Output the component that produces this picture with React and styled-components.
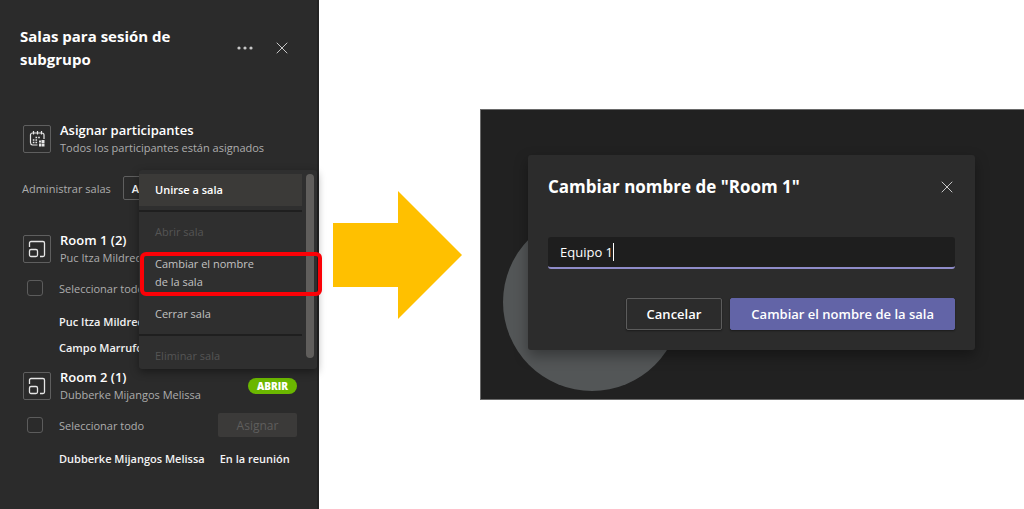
import React, { useState } from 'react'
import styled, { createGlobalStyle } from 'styled-components'

const GlobalStyle = createGlobalStyle`
    * {
        box-sizing: border-box;
    }

    body {
        margin: 0;
        background: #fff;
        font-family: "Open Sans", "Noto Sans", sans-serif;
        font-size: 11px;
        line-height: 17px;
    }

    button, input {
        font: inherit;
        color: inherit;
        margin: 0;
    }

    h1, h2, h3, p, ul {
        margin: 0;
        padding: 0;
        list-style: none;
    }
`

const Page = styled.div`
    display: flex;
    min-height: 100vh;
    align-items: center;
`

const Sidebar = styled.aside`
    flex: 0 0 319px;
    align-self: stretch;
    padding: 25px 20px 24px;
    background: #2b2b2b;
    border-right: 2px solid #232323;
    color: #adadad;
`

const SidebarHeader = styled.header`
    display: flex;
    align-items: center;
    margin-bottom: 51px;
    padding-right: 7px;
`

const Title = styled.h1`
    flex: 1;
    max-width: 190px;
    font-size: 15px;
    line-height: 23px;
    font-weight: 700;
    color: #fff;
`

const IconButton = styled.button`
    display: flex;
    align-items: center;
    justify-content: center;
    width: 16px;
    height: 20px;
    padding: 0;
    border: 0;
    background: none;
    color: #c8c8c8;
`

const HeaderActions = styled.div`
    display: flex;
    gap: 21px;
    margin-left: auto;
`

const Entry = styled.div`
    display: flex;
    align-items: center;
    gap: 9px;
    height: 34px;
    padding-left: 3px;
`

const IconFrame = styled.span`
    display: flex;
    align-items: center;
    justify-content: center;
    width: 28px;
    height: 28px;
    border: 1px solid #5f5f5f;
    border-radius: 2px;
    color: #e6e6e6;
`

const EntryText = styled.div`
    flex: 1;
`

const EntryTitle = styled.h2`
    font-size: 13px;
    line-height: 17px;
    font-weight: 600;
    color: #fff;
`

const Badge = styled.span`
    padding: 0 9px;
    border-radius: 8px;
    background: #6bb700;
    color: #fff;
    font-size: 10px;
    line-height: 16px;
    font-weight: 800;
`

const ManageRow = styled.div`
    position: relative;
    display: flex;
    align-items: center;
    gap: 12px;
    height: 24px;
    margin: 20px 0 32px;
    padding-left: 2px;
`

const OutlineButton = styled.button`
    width: 40px;
    height: 24px;
    padding: 0 8px;
    border: 1px solid #5f5f5f;
    border-radius: 2px;
    background: none;
    color: #fff;
    font-weight: 600;
    text-align: left;
`

const SelectRow = styled.div`
    display: flex;
    align-items: center;
    justify-content: space-between;
    height: 24px;
    margin: 10px 0 13px;
    padding-left: 7px;
`

const CheckLabel = styled.label`
    display: flex;
    align-items: center;
    gap: 16px;
`

const Checkbox = styled.input`
    appearance: none;
    width: 16px;
    height: 16px;
    border: 1px solid #5c5c5c;
    border-radius: 3px;
`

const AssignButton = styled.button`
    width: 79px;
    height: 24px;
    padding: 0;
    border: 0;
    border-radius: 2px;
    background: #3b3a39;
    color: #5f5e5d;
    font-size: 12px;
`

const Person = styled.li`
    display: flex;
    gap: 15px;
    height: 26px;
    padding-left: 39px;
    font-weight: 600;
    line-height: 18px;
    color: #f3f3f3;
    white-space: nowrap;
`

const Room = styled.section`
    margin-top: ${props => props.$spaced ? '4px' : 0};
`

const Menu = styled.div`
    position: absolute;
    z-index: 1;
    top: -6px;
    left: 119px;
    display: flex;
    width: 178px;
    padding: 4px 3px 0 0;
    border-radius: 3px;
    background: #2f2f2f;
    box-shadow: 0 3px 8px rgba(0, 0, 0, 0.4);
`

const MenuList = styled.ul`
    flex: 1;
`

const MenuItem = styled.button`
    display: block;
    width: 100%;
    padding: 7px 40px 7px 16px;
    border: 0;
    background: ${props => props.$active ? '#3b3a38' : 'none'};
    color: ${props => props.$active ? '#fff' : '#c2c2c2'};
    line-height: 18px;
    font-weight: ${props => props.$active ? 600 : 400};
    text-align: left;

    &:disabled {
        color: #555;
    }

    li:last-child > & {
        padding-bottom: 4px;
    }
`

const Divider = styled.li`
    height: 2px;
    margin: 4px 0;
    background: #1f1f1f;
`

const Marked = styled.li`
    position: relative;

    &:after {
        content: "";
        position: absolute;
        inset: 4px -20px 2px 1px;
        border: 4px solid #fb0207;
        border-radius: 6px;
    }
`

const Scrollbar = styled.div`
    width: 8px;
    margin: 0 0 11px 4px;
    border-radius: 4px;
    background: #605e5c;
`

const ArrowColumn = styled.div`
    flex: 0 0 161px;
    padding-left: 14px;

    svg {
        display: block;
    }
`

const Stage = styled.main`
    position: relative;
    flex: 1;
    padding: 45px 49px 49px 47px;
    border: solid #6a6a6a;
    border-width: 1px 0 1px 1px;
    background: #212121;
    overflow: hidden;
`

const Avatar = styled.div`
    position: absolute;
    left: 22px;
    bottom: 8px;
    width: 178px;
    height: 178px;
    border-radius: 50%;
    background: #535657;
`

const Dialog = styled.form`
    position: relative;
    padding: 20px;
    border-radius: 3px;
    background: #2c2c2c;
    box-shadow: 0 6px 14px rgba(0, 0, 0, 0.35);
    color: #fff;
`

const DialogHeader = styled.header`
    display: flex;
    align-items: center;
    justify-content: space-between;
    height: 24px;
    margin-bottom: 38px;
`

const DialogTitle = styled.h2`
    font-size: 17px;
    line-height: 24px;
    font-weight: 700;
`

const Field = styled.div`
    display: flex;
    align-items: center;
    height: 32px;
    padding: 0 12px;
    border-bottom: 2px solid #8f8cc9;
    border-radius: 3px;
    background: #1e1e1e;
`

const NameInput = styled.input`
    field-sizing: content;
    padding: 0;
    border: 0;
    outline: 0;
    background: none;
    caret-color: transparent;
    font-size: 13px;
    line-height: 18px;
`

const Caret = styled.span`
    width: 1px;
    height: 18px;
    background: #fff;
`

const DialogActions = styled.div`
    display: flex;
    justify-content: flex-end;
    gap: 8px;
    margin-top: 29px;
`

const DialogButton = styled.button`
    min-width: 96px;
    height: 32px;
    padding: 0 20px;
    border: 1px solid ${props => props.$primary ? '#6264a7' : '#5c5c5c'};
    border-radius: 2px;
    background: ${props => props.$primary ? '#6264a7' : '#2c2c2c'};
    box-shadow: 0 1px 2px rgba(0, 0, 0, 0.4);
    font-size: 13px;
    font-weight: 600;
`

const CloseIcon = () => (
    <svg width="12" height="12" viewBox="0 0 12 12" fill="none" stroke="currentColor" strokeLinecap="round">
        <path d="M1 1l10 10M11 1L1 11" />
    </svg>
)

const MoreIcon = () => (
    <svg width="16" height="4" viewBox="0 0 16 4" fill="currentColor">
        <circle cx="2" cy="2" r="1.6" />
        <circle cx="8" cy="2" r="1.6" />
        <circle cx="14" cy="2" r="1.6" />
    </svg>
)

const CalendarIcon = () => (
    <svg width="20" height="20" viewBox="0 0 20 20" fill="none" stroke="currentColor" strokeWidth="1.2">
        <path d="M10.500 16H5.500a2.500 2.500 0 0 1-2-2.500V6a2 2 0 0 1 2-2h9.500a2 2 0 0 1 2 2v4M6.500 2v3.500M10.500 2v3.500M14.500 2v3.500" />
        <path d="M8.500 8.500h1.600M11.200 8.500h1.600M5.800 11h1.600M8.500 11h1.600M5.800 13.500h1.600M8.500 13.500h1.600" strokeWidth="1.700" />
        <path d="M14.500 11h3v3h-3zM12 14.500h2.500v3H12zM15 14.500h2.500v3H15zM12 11.500h2v2h-2z" fill="currentColor" stroke="none" />
    </svg>
)

const RoomIcon = () => (
    <svg width="20" height="20" viewBox="0 0 20 20" fill="none" stroke="currentColor" strokeWidth="1.3">
        <path d="M2.500 8V4A1.500 1.500 0 0 1 4 2.500h12A1.500 1.500 0 0 1 17.500 4v12a1.500 1.500 0 0 1-1.500 1.500h-3" />
        <rect x="2.500" y="10.500" width="8" height="7" rx="1.500" />
    </svg>
)

const RoomEntry = ({ name, people, badge }) => (
    <Entry>
        <IconFrame><RoomIcon /></IconFrame>
        <EntryText>
            <EntryTitle>{name}</EntryTitle>
            <p>{people}</p>
        </EntryText>
        {badge && <Badge>{badge}</Badge>}
    </Entry>
)

const RoomMenu = () => (
    <Menu>
        <MenuList>
            <li><MenuItem type="button" $active>Unirse a sala</MenuItem></li>
            <Divider />
            <li><MenuItem type="button" disabled>Abrir sala</MenuItem></li>
            <Marked><MenuItem type="button">Cambiar el nombre de la sala</MenuItem></Marked>
            <li><MenuItem type="button">Cerrar sala</MenuItem></li>
            <Divider />
            <li><MenuItem type="button" disabled>Eliminar sala</MenuItem></li>
        </MenuList>
        <Scrollbar />
    </Menu>
)

const App = () => {
    const [name, setName] = useState('Equipo 1')

    return (
        <>
            <GlobalStyle />
            <Page>
                <Sidebar>
                    <SidebarHeader>
                        <Title>Salas para sesión de subgrupo</Title>
                        <HeaderActions>
                            <IconButton aria-label="Más opciones"><MoreIcon /></IconButton>
                            <IconButton aria-label="Cerrar"><CloseIcon /></IconButton>
                        </HeaderActions>
                    </SidebarHeader>
                    <Entry>
                        <IconFrame><CalendarIcon /></IconFrame>
                        <EntryText>
                            <EntryTitle>Asignar participantes</EntryTitle>
                            <p>Todos los participantes están asignados</p>
                        </EntryText>
                    </Entry>
                    <ManageRow>
                        <span>Administrar salas</span>
                        <OutlineButton>A</OutlineButton>
                        <RoomMenu />
                    </ManageRow>
                    <Room>
                        <RoomEntry name="Room 1 (2)" people="Puc Itza Mildred" />
                        <SelectRow>
                            <CheckLabel><Checkbox type="checkbox" />Seleccionar todo</CheckLabel>
                        </SelectRow>
                        <ul>
                            <Person>Puc Itza Mildred</Person>
                            <Person>Campo Marrufo</Person>
                        </ul>
                    </Room>
                    <Room $spaced>
                        <RoomEntry name="Room 2 (1)" people="Dubberke Mijangos Melissa" badge="ABRIR" />
                        <SelectRow>
                            <CheckLabel><Checkbox type="checkbox" />Seleccionar todo</CheckLabel>
                            <AssignButton disabled>Asignar</AssignButton>
                        </SelectRow>
                        <ul>
                            <Person><span>Dubberke Mijangos Melissa</span><span>En la reunión</span></Person>
                        </ul>
                    </Room>
                </Sidebar>
                <ArrowColumn>
                    <svg width="129" height="128" viewBox="0 0 129 128" fill="#ffc000">
                        <path d="M0 32h65V0l64 64-64 64V96H0z" />
                    </svg>
                </ArrowColumn>
                <Stage>
                    <Avatar />
                    <Dialog onSubmit={e => e.preventDefault()}>
                        <DialogHeader>
                            <DialogTitle>Cambiar nombre de "Room 1"</DialogTitle>
                            <IconButton type="button" aria-label="Cerrar"><CloseIcon /></IconButton>
                        </DialogHeader>
                        <Field>
                            <NameInput
                                aria-label="Nombre de la sala"
                                value={name}
                                onChange={e => setName(e.target.value)}
                            />
                            <Caret />
                        </Field>
                        <DialogActions>
                            <DialogButton type="button">Cancelar</DialogButton>
                            <DialogButton $primary>Cambiar el nombre de la sala</DialogButton>
                        </DialogActions>
                    </Dialog>
                </Stage>
            </Page>
        </>
    )
}

export default App
